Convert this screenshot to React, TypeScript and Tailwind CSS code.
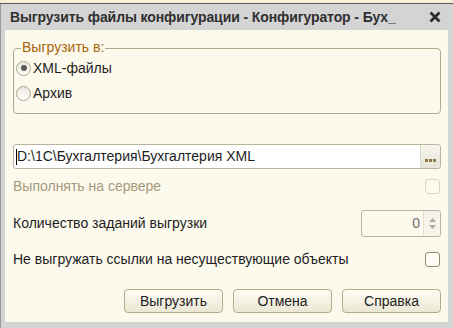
import React from "react";

const font = { fontFamily: '"Liberation Sans", Arial, sans-serif' };

function Radio({ checked, label }: { checked?: boolean; label: string }) {
  return (
    <div className="flex items-center h-[20px]">
      <div className="w-[15px] h-[15px] rounded-full border border-[#a9a68c] bg-gradient-to-b from-[#e9e7dc] to-[#ffffff] flex items-center justify-center">
        {checked && <div className="w-[6px] h-[6px] rounded-full bg-[#5a5a5a]" />}
      </div>
      <span className="ml-[2px] text-[14px] text-[#1e1e1e]">{label}</span>
    </div>
  );
}

function Button({ label }: { label: string }) {
  return (
    <div className="w-[99px] h-[24px] rounded-[4px] border border-[#b4ab8a] bg-gradient-to-b from-[#fefdf6] to-[#ebe7d3] flex items-center justify-center text-[14px] text-[#222]">
      {label}
    </div>
  );
}

export default function App() {
  return (
    <div style={font} className="w-[453px] h-[328px] bg-[#faf6e2] flex flex-col overflow-hidden">
      <div className="h-[4px] bg-[#f4efd6] border-b border-[#5c5c5c] shrink-0" />
      <div className="flex-1 flex flex-col bg-[#d4d4d4] pl-[4px] pr-[5px] pb-[6px] border-l border-[#9a9a9a]">
        <div className="h-[26px] flex items-center justify-between pl-[5px] pr-[7px] shrink-0">
          <span className="text-[14px] font-bold text-[#2f2f2f] tracking-[-0.1px] whitespace-nowrap">
            Выгрузить файлы конфигурации - Конфигуратор - Бух_
          </span>
          <svg width="12" height="12" viewBox="0 0 12 12">
            <path d="M1.5 1.5 L10.5 10.5 M10.5 1.5 L1.5 10.5" stroke="#2e2e2e" strokeWidth="2.8" strokeLinecap="butt" />
          </svg>
        </div>
        <div className="flex-1 bg-[#fcf9ed] pl-[8px] pr-[7px] pt-[18px] flex flex-col">
          <div className="relative border border-[#aeab8d] rounded-[4px] h-[66px] pt-[9px] pl-[2px] shrink-0">
            <span className="absolute left-[7px] top-[-10px] bg-[#fcf9ed] px-[1px] text-[14px] text-[#a76708] leading-[17px]">
              Выгрузить в:
            </span>
            <div className="flex flex-col gap-[5px]">
              <Radio checked label="XML-файлы" />
              <Radio label="Архив" />
            </div>
          </div>

          <div className="mt-[30px] h-[25px] rounded-[3px] border border-[#b8b59c] bg-white flex items-stretch shrink-0">
            <div className="flex-1 flex items-center pl-[2px] text-[14px] text-[#1e1e1e]">
              <span className="w-[1px] h-[16px] bg-[#000]" />
              D:\1C\Бухгалтерия\Бухгалтерия XML
            </div>
            <div className="w-[20px] border-l border-[#dcd9c6] bg-gradient-to-b from-[#f6f5ee] to-[#e7e4d6] rounded-r-[3px] flex items-end justify-center pb-[6px] gap-[1px]">
              <span className="w-[3px] h-[3px] bg-[#8d7a48]" />
              <span className="w-[3px] h-[3px] bg-[#8d7a48]" />
              <span className="w-[3px] h-[3px] bg-[#8d7a48]" />
            </div>
          </div>

          <div className="mt-[9px] h-[16px] flex items-center justify-between shrink-0">
            <span className="text-[14px] text-[#a69a7c]">Выполнять на сервере</span>
            <div className="w-[15px] h-[15px] rounded-[3px] border border-[#dad6c2] bg-[#fcf9ed] mr-[1px]" />
          </div>

          <div className="mt-[16px] h-[27px] flex items-center justify-between shrink-0">
            <span className="text-[14px] text-[#1e1e1e]">Количество заданий выгрузки</span>
            <div className="w-[80px] h-[27px] rounded-[3px] border border-[#b8b59c] bg-[#fcf9ed] flex items-stretch">
              <div className="flex-1 flex items-center justify-end pr-[3px] text-[14px] text-[#6e6e6e]">0</div>
              <div className="w-[17px] border-l border-[#e3e0cf] bg-[#f5f3ea] rounded-r-[3px] flex flex-col items-center justify-center gap-[3px]">
                <svg width="7" height="4" viewBox="0 0 7 4"><path d="M0 4 L3.5 0 L7 4 Z" fill="#a9a9a9" /></svg>
                <svg width="7" height="4" viewBox="0 0 7 4"><path d="M0 0 L3.5 4 L7 0 Z" fill="#a9a9a9" /></svg>
              </div>
            </div>
          </div>

          <div className="mt-[14px] h-[16px] flex items-center justify-between shrink-0">
            <span className="text-[14px] text-[#1e1e1e]">Не выгружать ссылки на несуществующие объекты</span>
            <div className="w-[15px] h-[15px] rounded-[3px] border border-[#8f8c72] bg-[#fefdf8] mr-[1px]" />
          </div>

          <div className="mt-[22px] flex justify-end gap-[10px] shrink-0">
            <Button label="Выгрузить" />
            <Button label="Отмена" />
            <Button label="Справка" />
          </div>
        </div>
      </div>
    </div>
  );
}
